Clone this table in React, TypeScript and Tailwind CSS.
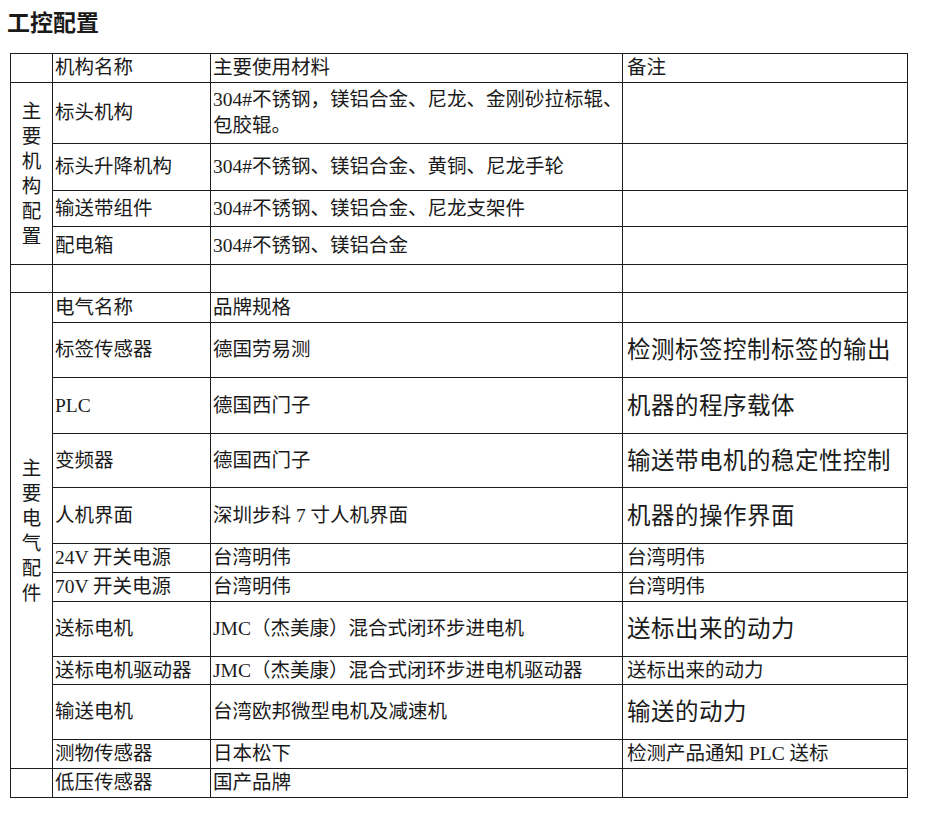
import React from "react";

type Row = {
  h: number;
  name: string;
  spec: React.ReactNode;
  note?: string;
  bigNote?: boolean;
};

const mechRows: Row[] = [
  {
    h: 61,
    name: "标头机构",
    spec: (
      <span className="whitespace-nowrap">
        304#不锈钢，镁铝合金、尼龙、金刚砂拉标辊、
        <br />
        包胶辊。
      </span>
    ),
  },
  { h: 47, name: "标头升降机构", spec: "304#不锈钢、镁铝合金、黄铜、尼龙手轮" },
  { h: 36, name: "输送带组件", spec: "304#不锈钢、镁铝合金、尼龙支架件" },
  { h: 38, name: "配电箱", spec: "304#不锈钢、镁铝合金" },
];

const elecRows: Row[] = [
  { h: 30, name: "电气名称", spec: "品牌规格" },
  { h: 55, name: "标签传感器", spec: "德国劳易测", note: "检测标签控制标签的输出", bigNote: true },
  { h: 56, name: "PLC", spec: "德国西门子", note: "机器的程序载体", bigNote: true },
  { h: 54, name: "变频器", spec: "德国西门子", note: "输送带电机的稳定性控制", bigNote: true },
  { h: 56, name: "人机界面", spec: "深圳步科 7 寸人机界面", note: "机器的操作界面", bigNote: true },
  { h: 29, name: "24V 开关电源", spec: "台湾明伟", note: "台湾明伟" },
  { h: 29, name: "70V 开关电源", spec: "台湾明伟", note: "台湾明伟" },
  { h: 55, name: "送标电机", spec: "JMC（杰美康）混合式闭环步进电机", note: "送标出来的动力", bigNote: true },
  { h: 28, name: "送标电机驱动器", spec: "JMC（杰美康）混合式闭环步进电机驱动器", note: "送标出来的动力" },
  { h: 55, name: "输送电机", spec: "台湾欧邦微型电机及减速机", note: "输送的动力", bigNote: true },
  { h: 29, name: "测物传感器", spec: "日本松下", note: "检测产品通知 PLC 送标" },
];

const cell = "border border-[#1c1c1c] align-middle p-0";

function Vertical({ text }: { text: string }) {
  return (
    <div className="flex flex-col items-center leading-[25px]">
      {[...text].map((c, i) => (
        <span key={i}>{c}</span>
      ))}
    </div>
  );
}

function DataCells({ r }: { r: Row }) {
  return (
    <>
      <td className={`${cell} pl-[2px]`}>{r.name}</td>
      <td className={`${cell} pl-[2px] leading-[26px]`}>{r.spec}</td>
      <td className={`${cell} pl-[4px] ${r.bigNote ? "text-[23.5px] tracking-[0.5px]" : ""}`}>
        {r.note ?? ""}
      </td>
    </>
  );
}

export default function App() {
  return (
    <div
      className="min-h-screen bg-white text-[#1a1a1a]"
      style={{ fontFamily: '"Liberation Serif", "Noto Sans CJK SC", serif' }}
    >
      <div className="pt-[9px] pl-[7px] text-[23px] leading-[30px] font-bold">工控配置</div>

      <table className="mt-[14px] ml-[10px] border-collapse table-fixed w-[897px] text-[19.5px] leading-[24px]">
        <colgroup>
          <col className="w-[42px]" />
          <col className="w-[158px]" />
          <col className="w-[412px]" />
          <col className="w-[285px]" />
        </colgroup>
        <tbody>
          <tr style={{ height: 29 }}>
            <td className={cell}></td>
            <td className={`${cell} pl-[2px]`}>机构名称</td>
            <td className={`${cell} pl-[2px]`}>主要使用材料</td>
            <td className={`${cell} pl-[4px]`}>备注</td>
          </tr>

          {mechRows.map((r, i) => (
            <tr key={r.name} style={{ height: r.h }}>
              {i === 0 && (
                <td className={`${cell} text-center`} rowSpan={mechRows.length}>
                  <Vertical text="主要机构配置" />
                </td>
              )}
              <DataCells r={r} />
            </tr>
          ))}

          <tr style={{ height: 28 }}>
            <td className={cell}></td>
            <td className={cell}></td>
            <td className={cell}></td>
            <td className={cell}></td>
          </tr>

          {elecRows.map((r, i) => (
            <tr key={r.name + i} style={{ height: r.h }}>
              {i === 0 && (
                <td className={`${cell} text-center`} rowSpan={elecRows.length}>
                  <Vertical text="主要电气配件" />
                </td>
              )}
              <DataCells r={r} />
            </tr>
          ))}

          <tr style={{ height: 29 }}>
            <td className={cell}></td>
            <td className={`${cell} pl-[2px]`}>低压传感器</td>
            <td className={`${cell} pl-[2px]`}>国产品牌</td>
            <td className={cell}></td>
          </tr>
        </tbody>
      </table>
    </div>
  );
}
